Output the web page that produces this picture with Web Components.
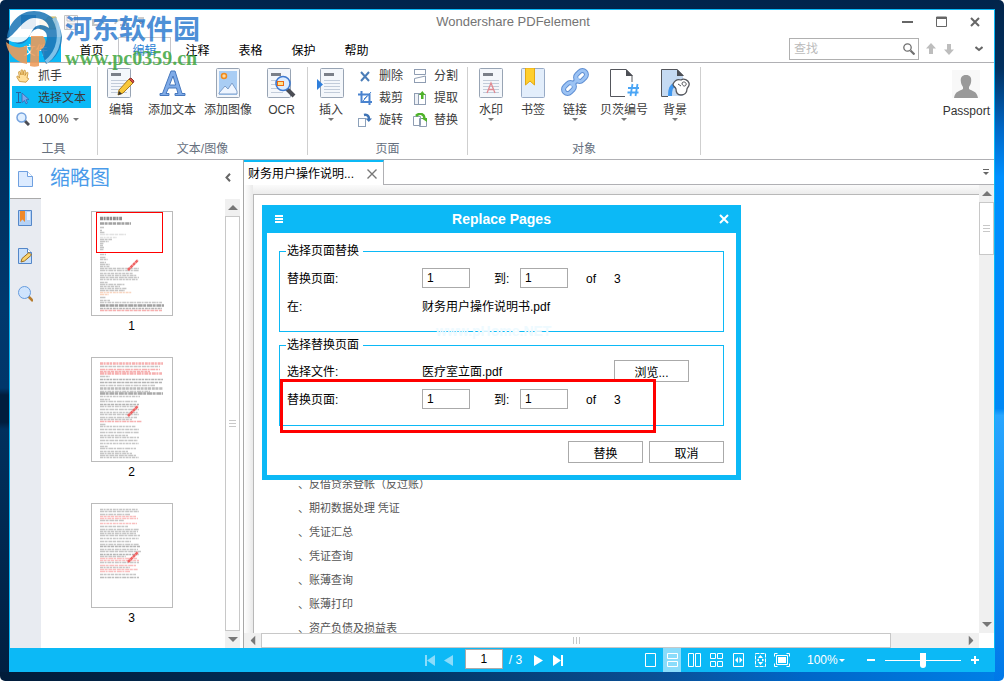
<!DOCTYPE html>
<html lang="zh-CN">
<head>
<meta charset="utf-8">
<title>Wondershare PDFelement</title>
<style>
html,body{margin:0;padding:0;background:#fff}
body{font:12px/16px "Liberation Sans","Noto Sans CJK SC",sans-serif;color:#222;
--blue:#0cb9f6;--line:#b0b0b4;--text:#3b3b3b}
</style>
</head>
<body>
<pdf-window></pdf-window>
<script>
const BASE = `
:host,*{box-sizing:border-box}
button,input,select{font:inherit;color:inherit;margin:0;padding:0;border:0;background:none;border-radius:0;appearance:none;outline:none}
button{cursor:pointer}
a{color:inherit;text-decoration:none}
svg{display:block}
`;
const define = (name, html, setup) => {
  const t = document.createElement('template');
  t.innerHTML = html.replace('<style>', '<style>' + BASE);
  customElements.define(name, class extends HTMLElement {
    constructor() {
      super();
      this.attachShadow({mode: 'open'}).append(t.content.cloneNode(true));
    }
    connectedCallback() { if (setup) setup(this, this.shadowRoot); }
  });
};

/* Icon set: name -> [width, height, markup] */
const sheet = (x = 0) => `<rect x="${x + .5}" y=".5" width="23" height="29" rx="1" fill="#f4f7fb" stroke="#98a4b4"/>`;
const lines = (x = 0, w = 16) => `<path d="M${x + 4} 6.5h10" stroke="#7a7f88" stroke-width="3"/><path d="M${x + 4} 12.5h${w}M${x + 4} 15.5h${w}M${x + 4} 18.5h${w}M${x + 4} 21.5h${w}M${x + 4} 24.5h${w}" stroke="#c2ccda"/>`;
const ICONS = {
  edit: [28, 30, `${sheet()}${lines()}<path d="M11 27l1-5L22 11l4 4-10 10z" fill="#f8c83a" stroke="#a97a1c"/><path d="M22 11l2-1 3 3-1 2z" fill="#d85048" stroke="#94352c"/><path d="M11 27l1-4 3 3z" fill="#333"/>`],
  letter: [28, 30, `<path d="M2 27.500v-2h2.500L13 3h4l7 22.500h3v2H17v-2h3l-1.500-5.500h-8L8 25.500h3v2zM11.500 17h6.200L15 8z" fill="#7fabe8" stroke="#4778bd"/>`],
  image: [24, 30, `${sheet()}<rect x="3" y="3" width="18" height="24" fill="#a9cdf4"/><circle cx="8" cy="8" r="2.500" fill="#ffd9a0" stroke="#ef8a1d" stroke-width="1.500"/><path d="M3 25l6-7 3 3 4-6 5 8v3H3z" fill="#eef5ff" stroke="#7f9fca"/>`],
  ocr: [29, 30, `${sheet()}<path d="M4 6.500h10" stroke="#7a7f88" stroke-width="3"/><path d="M4 12.500h5M4 16.500h5M4 20.500h9M4 24.500h12" stroke="#c2ccda"/><path d="M20 21l7 7" stroke="#4b4d54" stroke-width="4"/><circle cx="16" cy="15.500" r="7" fill="#dcecff" stroke="#3f7ad0" stroke-width="1.600"/><rect x="10.500" y="13.500" width="6" height="4" fill="#ffe08a" stroke="#ee6a12"/>`],
  insert: [28, 30, `${sheet(3)}${lines(3)}<path d="M0 11l6 5.500-6 5.500z" fill="#2f7fdc"/>`],
  watermark: [24, 30, `${sheet()}<path d="M4 6.500h10" stroke="#7a7f88" stroke-width="3"/><path d="M4 12.500h16M4 15.500h16M4 18.500h16M4 21.500h16M4 24.500h16" stroke="#c2ccda"/><path d="M8 25l4-10 4 10M9.500 21.500h5" fill="none" stroke="#e08a92" stroke-width="1.300"/>`],
  bookmark: [24, 30, `<rect x=".5" y=".5" width="23" height="29" rx="1" fill="#e3eefb" stroke="#98abc6"/><path d="M4.500 0h9v17l-4.500-4-4.500 4z" fill="#ffcf2e" stroke="#e2a716"/>`],
  link: [28, 30, `<g fill="none" stroke="#5f8fd3" stroke-width="5"><rect x="-6" y="-4" width="12" height="8" rx="4" transform="translate(20 8) rotate(-45)"/><rect x="-6" y="-4" width="12" height="8" rx="4" transform="translate(8 20) rotate(-45)"/><path d="M11 17l6-6"/></g><g fill="none" stroke="#9cc3f4" stroke-width="3"><rect x="-6" y="-4" width="12" height="8" rx="4" transform="translate(20 8) rotate(-45)"/><rect x="-6" y="-4" width="12" height="8" rx="4" transform="translate(8 20) rotate(-45)"/><path d="M10 18l8-8"/></g>`],
  bates: [30, 30, `<path d="M16 28.500H1.500v-27H17l6 6V14" fill="#fff" stroke="#54565c"/><path d="M17 1v7h7z" fill="#4d4f55"/><path d="M23.500 16l-2 12M28.500 16l-2 12M19 20h11M18.500 24.500h11" stroke="#4aa5f5" stroke-width="1.800"/>`],
  background: [30, 30, `<path d="M1 1h16l6 6v21H1z" fill="#c5daf2"/><path d="M8 28.500H1.500v-27H17l6 6" fill="none" stroke="#54565c"/><path d="M17 1v7h7z" fill="#4d4f55"/><path d="M10 28c0-7 1-10 5-11" fill="none" stroke="#3f97ef" stroke-width="4"/><path d="M13 16c2-4 5-5 8-4 3-2 7 0 8 3 1 4-2 4-2 6 0 4-3 6-6 6-4 0-5-3-5-6-1-3-3-2-3-5z" fill="#fff" stroke="#54565c" stroke-width="1.300"/><path d="M18 16l3 2M22 15c1-2 5-1 4 2-1 2-4 1-4-2z" fill="none" stroke="#54565c"/>`],
  hand: [14, 14, `<path d="M3.500 12.500L1 8.500c-.8-1.500 1-1.800 1.600-.8L3.500 9 2.600 3.500c-.2-1.300 1.300-1.500 1.600-.2L5 6V1.700C5 .4 6.700.4 6.800 1.700L7 6l.8-4c.3-1.200 1.800-1 1.600.3L9 6.500l1.400-2.700c.6-1 1.900-.5 1.500.7L11 9l1 .2c1 .3.8 1-.3 2l-1.700 2z" fill="#ffdf9a" stroke="#c48b2c" stroke-width=".8"/>`],
  seltext: [14, 14, `<path d="M0 1.500h5M0 11.500h5M2.500 1v11" stroke="#27639f"/><path d="M6 2l7 6.500-3 .3 1.500 3.200-1.500.8L8.500 9.500 6 11.500z" fill="#7da6e8" stroke="#2f68b4" stroke-width=".8"/>`],
  lens: [14, 14, `<path d="M8 8l5 5" stroke="#4b4d54" stroke-width="3"/><circle cx="5.500" cy="5.500" r="4.500" fill="#e0efff" stroke="#74a2de" stroke-width="1.500"/>`],
  del: [14, 14, `<path d="M3 3l8 9M11 3l-8 9" stroke="#4b7db8" stroke-width="2"/>`],
  crop: [14, 14, `<path d="M3.500 0v11H14M0 3.500h11.500V14" fill="none" stroke="#4a83cf" stroke-width="2"/><path d="M5 10L13 1M6 8l3-3" stroke="#4a83cf"/>`],
  rotate: [14, 14, `<rect x=".5" y="5.500" width="7" height="8" fill="#fff" stroke="#8da1ba"/><path d="M6 2c4-1 5 2 5 4" fill="none" stroke="#3f73b5" stroke-width="2.500"/><path d="M7.500 5.500H14L10.800 9z" fill="#3f73b5"/>`],
  split: [14, 14, `<path d="M1.500 0v5.500h11V0M1.500 14V9.500L12.500 7v7" fill="#fff" stroke="#8f9db2"/><path d="M1 .5h12M1 13.500h12" stroke="#8f9db2"/>`],
  extract: [14, 14, `<rect x="1.500" y="2.500" width="8" height="11" fill="#eef1f6" stroke="#8f9db2"/><rect x="5.500" y="3.500" width="7" height="10" fill="#fff" stroke="#8f9db2"/><path d="M8 8V4H6l3.300-4L12.500 4h-2v4z" fill="#4fb32a"/>`],
  replace: [14, 14, `<path d="M.5 3.500h7v9h-7zM6.500 5.500h7v8h-7z" fill="#fff" stroke="#8f9db2"/><path d="M3 3c4-4 8-2 8.500 2" fill="none" stroke="#4fb32a" stroke-width="2.500"/><path d="M8 5h6v4z" fill="#4fb32a"/>`],
  page: [15, 16, `<path d="M.5.500h9l5 5v10H.5z" fill="#dcebff" stroke="#6fa0e0"/><path d="M9.500.500v5h5" fill="#fff" stroke="#6fa0e0"/>`],
  marks: [15, 16, `<path d="M.5.500h13v15H.5z" fill="#b5d2f6" stroke="#5487c9"/><path d="M2 1h5v11L4.500 9.500 2 12z" fill="#f08a2a"/><path d="M9 2h3v8H9z" fill="#e9f3ff"/>`],
  notes: [15, 16, `<path d="M.5.500h9l4 4v11H.5z" fill="#c9e0fb" stroke="#5487c9"/><path d="M9.500.500v4h4" fill="#fff" stroke="#5487c9"/><path d="M3 14l1-3.500 7-6 2.500 2.500-7 6z" fill="#f9d36e" stroke="#9a6d23"/>`],
  find: [15, 16, `<path d="M10 10l5 5" stroke="#b67b2c" stroke-width="2.600"/><circle cx="6.500" cy="6.500" r="6" fill="#cfe4fd" stroke="#659bdd"/>`],
  search: [12, 12, `<path d="M7.500 7.500l4 4" stroke="#707070" stroke-width="2.200"/><circle cx="4.500" cy="4.500" r="3.700" fill="none" stroke="#707070" stroke-width="1.300"/>`],
  up: [10, 12, `<path d="M5 0l5 5.500H7V11H3V5.500H0z" fill="#bdbdbd"/>`],
  down: [10, 12, `<path d="M5 12L0 6.500h3V1h4v5.500h3z" fill="#bdbdbd"/>`],
  chevdown: [8, 6, `<path d="M.5 1L4 4l3.500-3" fill="none" stroke="#666" stroke-width="2"/>`],
  chevleft: [6, 9, `<path d="M5 .8L1.500 4.500 5 8.200" fill="none" stroke="#666" stroke-width="2"/>`],
  caret: [6, 3, `<path d="M0 0h6L3 3z" fill="currentColor"/>`],
  min: [12, 12, `<path d="M0 6h11" stroke="#666" stroke-width="2"/>`],
  max: [12, 12, `<path d="M.5 1h10v9.500H.5z" fill="none" stroke="#666"/><path d="M0 2h11" stroke="#666" stroke-width="2"/>`],
  close: [10, 10, `<path d="M1 1l8 8M9 1L1 9" stroke="currentColor" stroke-width="2"/>`],
  thin: [10, 10, `<path d="M.5.500l9 9M9.500.500l-9 9" stroke="#777" stroke-width="1.400"/>`],
  menu: [8, 8, `<path d="M0 1h8M0 4h8M0 7h8" stroke="#fff" stroke-width="2"/>`],
  user: [28, 28, `<path d="M0 0h28v28H0z" fill="#f8f8f8"/><path d="M14 5c4 0 5.500 2.500 5.200 6-.2 3-1.200 4.500-2.200 6v2c3 2 8 2 9 9H2c1-7 6-7 9-9v-2c-1-1.500-2-3-2.200-6C8.500 7.500 10 5 14 5z" fill="#999"/>`],
  first: [10, 11, `<path d="M1 0v11" stroke="currentColor" stroke-width="2"/><path d="M10 0v11L2 5.500z" fill="currentColor"/>`],
  prev: [9, 11, `<path d="M9 0v11L0 5.500z" fill="currentColor"/>`],
  next: [9, 11, `<path d="M0 0v11l9-5.500z" fill="currentColor"/>`],
  last: [10, 11, `<path d="M9 0v11" stroke="currentColor" stroke-width="2"/><path d="M0 0v11l8-5.500z" fill="currentColor"/>`],
  v1: [11, 14, `<path d="M.5.500h10v13H.5z" fill="none" stroke="#fff"/>`],
  v2: [11, 14, `<path d="M.5.500h10v5H.5zM.5 8.500h10v5H.5z" fill="none" stroke="#fff"/>`],
  v3: [13, 14, `<path d="M.5.500h5v13h-5zM7.500.500h5v13h-5z" fill="none" stroke="#fff"/>`],
  v4: [13, 14, `<path d="M.5.500h5v5h-5zM7.500.500h5v5h-5zM.5 8.500h5v5h-5zM7.500 8.500h5v5h-5z" fill="none" stroke="#fff"/>`],
  v5: [11, 14, `<path d="M.5.500h10v13H.5z" fill="none" stroke="#fff"/><path d="M5 4v6L2 7zM6.500 4v6l3-3z" fill="#fff"/>`],
  v6: [11, 14, `<path d="M.5.500h10v13H.5z" fill="none" stroke="#fff" stroke-dasharray="4 1"/><path d="M5.500 2L8 5H3zM5.500 12L3 9h5zM1.500 7L4 5.500v3zM9.500 7L7 5.500v3z" fill="#fff"/>`],
  v7: [16, 14, `<path d="M3.500.500H.5v3M12.500.500h3v3M.5 10.500v3h3M15.500 10.500v3h-3M2.500 2.500h11v9h-11z" fill="none" stroke="#fff"/><path d="M4 4h8v6H4z" fill="#fff"/>`],
  minus: [8, 8, `<path d="M0 4h8" stroke="#fff" stroke-width="2"/>`],
  plus: [8, 8, `<path d="M0 4h8M4 0v8" stroke="#fff" stroke-width="2"/>`],
  quick: [130, 18, `<path d="M1 2h15v14H1z" fill="#2a6fb0"/><path d="M20 7h6l2-3h8v12H20z" fill="#e9d27a" stroke="#c9b060"/><path d="M44.500 2.500h13v14h-13zM47 3v5h8V3M47 16v-5h8v5" fill="#f6f6f6" stroke="#c4c4c4"/><path d="M73 12c0-6 9-7 11-1M73 6v6h6M106 12c0-6-9-7-11-1M106 6v6h-6" fill="none" stroke="#c4c4c4" stroke-width="2"/><path d="M118 5h6M118 8h6l-3 3z" fill="#999" stroke="#999"/>`]
};
const glyph = name => {
  const [w, h, m] = ICONS[name];
  return `<svg width="${w}" height="${h}" viewBox="0 0 ${w} ${h}" aria-hidden="true">${m}</svg>`;
};
define('ui-icon', `<style>:host{display:block;flex:none}span{display:block}</style><span></span>`, (el, r) => {
  r.querySelector('span').innerHTML = glyph(el.getAttribute('name'));
});

define('title-bar', `<style>
:host{display:flex;align-items:center;height:27px;padding:0 12px 3px 10px;color:#747474}
h1{flex:1;margin:0;padding-right:26px;font:13px/16px "Liberation Sans",sans-serif;text-align:center}
.win{display:flex;gap:22px;color:#666}
.win button{width:12px;height:12px}
</style>
<ui-icon name="quick"></ui-icon>
<h1>Wondershare PDFelement</h1>
<div class="win"><button aria-label="最小化"><ui-icon name="min"></ui-icon></button><button aria-label="最大化"><ui-icon name="max"></ui-icon></button><button aria-label="关闭"><ui-icon name="close"></ui-icon></button></div>`);

define('menu-tabs', `<style>
:host{display:flex;align-items:flex-end;height:26px;border-bottom:1px solid var(--line);color:#000}
nav{display:flex;flex:1;height:25px}
a{display:block;width:53px;text-align:center;line-height:28px;height:25px}
a.file{width:51px;background:var(--blue);color:#fff;margin-right:4px}
a.on{color:#2a7fd4;border:1px solid #c6c6ca;border-bottom:0;line-height:26px}
.search{display:flex;align-items:center;width:130px;height:22px;margin:0 3px 2px 0;padding:0 3px 0 4px;border:1px solid #b0b0b0}
.search input{flex:1;min-width:0;height:18px}
.search input::placeholder{color:#bbb;opacity:1}
.tools{display:flex;align-items:center;height:20px;margin-bottom:3px;padding-right:6px}
.tools button{width:18px;display:flex;justify-content:center}
.tools button:last-child{margin-left:12px}
</style>
<nav><a class="file" href="#f">文件</a><a href="#h">首页</a><a class="on" href="#e">编辑</a><a href="#a">注释</a><a href="#t">表格</a><a href="#p">保护</a><a href="#b">帮助</a></nav>
<label class="search"><input placeholder="查找" aria-label="查找"><ui-icon name="search"></ui-icon></label>
<div class="tools"><button aria-label="上一个"><ui-icon name="up"></ui-icon></button><button aria-label="下一个"><ui-icon name="down"></ui-icon></button><button aria-label="折叠"><ui-icon name="chevdown"></ui-icon></button></div>`);

define('ribbon-group', `<style>
:host{display:flex;flex-direction:column;border-right:1px solid #cfcfcf;margin:4px 0}
.items{display:flex;flex:1;min-height:0}
h2{margin:0 0 -2px;font-size:12px;font-weight:400;line-height:16px;text-align:center;color:#66707e}
</style><div class="items"><slot></slot></div><h2></h2>`, (el, r) => { r.querySelector('h2').textContent = el.getAttribute('label'); });

define('ribbon-button', `<style>
:host{display:block;width:var(--w,46px);color:var(--text)}
:host([wide]){width:56px}
button{display:flex;flex-direction:column;align-items:center;width:100%;padding-top:1px;white-space:nowrap}
.holder{height:30px}
span{margin-top:4px;line-height:16px}
.caret{color:#777}
:host(:not([menu])) .caret{display:none}
</style><button><div class="holder"></div><span><slot></slot></span><ui-icon class="caret" name="caret"></ui-icon></button>`, (el, r) => {
  r.querySelector('.holder').innerHTML = glyph(el.getAttribute('icon'));
});

define('tool-button', `<style>
:host{display:block;color:var(--text)}
button{display:flex;align-items:center;gap:var(--g,7px);height:22px;width:100%;padding:1px 4px 0;white-space:nowrap}
:host([on]) button{background:var(--blue)}
.holder{width:14px;height:14px}
</style><button><div class="holder"></div><slot></slot></button>`, (el, r) => {
  r.querySelector('.holder').innerHTML = glyph(el.getAttribute('icon'));
});

define('ribbon-bar', `<style>
:host{display:flex;height:97px;border-bottom:1px solid var(--line)}
.hand{width:87px;padding:0 6px 0 2px;margin-top:-3px}
.zoom{display:flex;align-items:center;height:22px;padding-left:4px;gap:8px;color:var(--text)}
.zoom select{width:32px;margin-right:-5px}
.zoom .c{color:#777}
.cols{display:grid;grid-template-columns:55px 58px;grid-auto-rows:22px;align-content:start;margin-top:-3px}
.user{margin-left:auto;display:flex;flex-direction:column;align-items:center;padding:7px 4px 0 0;color:#333;height:60px}
.user span{margin-top:5px}
.obj{--w:42px;padding:0 2px}
</style>
<ribbon-group label="工具"><div class="hand"><tool-button icon="hand" style="--g:8px">抓手</tool-button><tool-button icon="seltext" on style="--g:8px">选择文本</tool-button><div class="zoom"><ui-icon name="lens"></ui-icon><select aria-label="缩放"><option>100%</option></select><ui-icon class="c" name="caret"></ui-icon></div></div></ribbon-group>
<ribbon-group label="文本/图像"><ribbon-button icon="edit">编辑</ribbon-button><ribbon-button wide icon="letter">添加文本</ribbon-button><ribbon-button wide icon="image">添加图像</ribbon-button><ribbon-button style="--w:51px" icon="ocr">OCR</ribbon-button></ribbon-group>
<ribbon-group label="页面"><ribbon-button icon="insert" menu>插入</ribbon-button><div class="cols"><tool-button icon="del">删除</tool-button><tool-button icon="split">分割</tool-button><tool-button icon="crop">裁剪</tool-button><tool-button icon="extract">提取</tool-button><tool-button icon="rotate">旋转</tool-button><tool-button icon="replace">替换</tool-button></div></ribbon-group>
<ribbon-group class="obj" label="对象"><ribbon-button icon="watermark" menu>水印</ribbon-button><ribbon-button icon="bookmark">书签</ribbon-button><ribbon-button icon="link" menu>链接</ribbon-button><ribbon-button wide icon="bates" menu>贝茨编号</ribbon-button><ribbon-button style="--w:46px" icon="background" menu>背景</ribbon-button></ribbon-group>
<button class="user"><ui-icon name="user"></ui-icon><span>Passport</span></button>`);

define('side-rail', `<style>
:host{display:flex;flex-direction:column;width:31px;background:#e8ebf1}
button{display:flex;align-items:center;justify-content:center;height:38px;width:31px}
button.on{height:39px;background:#fff;border-bottom:1px solid #aaa}
</style><button class="on" aria-label="缩略图"><ui-icon name="page"></ui-icon></button><button aria-label="书签"><ui-icon name="marks"></ui-icon></button><button aria-label="注释"><ui-icon name="notes"></ui-icon></button><button aria-label="搜索"><ui-icon name="find"></ui-icon></button>`);

define('scroll-bar', `<style>
:host{display:flex;flex-direction:column;width:15px;background:#f0f0f0}
:host([dir=h]){flex-direction:row;width:auto;height:15px}
button{display:flex;align-items:center;justify-content:center;flex:none;width:15px;height:17px}
:host([dir=h]) button{width:17px;height:15px}
.thumb{display:flex;align-items:center;justify-content:center;flex:var(--size,1) 1 0;background:#fff;border:1px solid #c8c8c8}
.rest{flex:var(--rest,0) 1 0}
.g{width:7px;height:7px;background:repeating-linear-gradient(#c8c8c8 0 1px,transparent 1px 3px)}
:host([dir=h]) .g{background:repeating-linear-gradient(90deg,#c8c8c8 0 1px,transparent 1px 3px)}
:host([dir=h]) svg{transform:rotate(-90deg)}
</style>
<button aria-label="向前"><svg width="10" height="5"><path d="M5 0l5 5H0z" fill="#777"/></svg></button><div class="thumb"><div class="g"></div></div><div class="rest"></div><button aria-label="向后"><svg width="10" height="5"><path d="M5 5L0 0h10z" fill="#777"/></svg></button>`);

/* Page miniature: rows are [y, width, colour], drawn as dashed strokes */
const MINI = {
  1: [[6,22,'#333',3],[11,31,'#555',2],[15,4],[18,2],[20,5],[22,26,'#ccc'],[25,17,'#ccc'],[27,12],[29,9],[31,4],[33,3],[35,4],[37,4],[42,6],[45,6],[47,8],[50,6],[52,10],[54,10],[56,39],[58,39],[61,33],[63,37],[65,39],[67,38],[70,8],[72,25],[74,20],[76,27],[78,25],[80,32,'#f3b48e'],[82,9,'#f3b48e'],[85,6],[88,10],[90,62],[93,64,'#555',2],[96,62,'#777'],[98,62,'#f07070']],
  2: [[5,63,'#f07070',2],[8,60],[11,60,'#f07070'],[13,50,'#f07070'],[15,62,'#f07070',2],[18,10],[21,63,'#777'],[24,62,'#777'],[27,55],[30,63,'#888',2],[33,50],[35,63,'#666',2],[38,40],[41,10],[43,37],[46,39,'#777'],[48,36],[51,39],[54,38],[56,39],[59,37],[61,32],[63,42,'#f07070'],[66,6],[68,36],[71,39],[74,39],[77,28],[79,39],[82,38],[85,39],[88,8],[90,36],[93,28],[95,32],[97,36],[99,39]],
  3: [[5,38],[7,39],[10,30],[12,36,'#f58a8a'],[14,38,'#f58a8a'],[16,24],[19,37,'#f58a8a'],[22,28],[25,39],[27,38],[29,36],[31,40],[34,39],[37,31],[40,39],[42,40,'#777'],[45,38],[47,41],[50,39,'#777'],[52,26],[54,37,'#f58a8a'],[56,39,'#f58a8a'],[58,39],[61,36,'#f58a8a'],[63,30],[65,38,'#f58a8a'],[67,30,'#f58a8a'],[70,36],[73,39,'#888']]
};
define('page-thumb', `<style>
:host{display:block;height:146px;text-align:center;color:#000}
a{display:block}
.p{display:block;width:82px;height:105px;margin:0 auto 2px;border:1px solid #bbb;background:#fff}
.n{display:block}
</style><a href="#page"><span class="p"></span><span class="n"></span></a>`, (el, r) => {
  const n = el.getAttribute('n');
  const rows = MINI[n].map(([y, w, c = '#999', h = 1], i) => `<path d="M8 ${y + .5}h${w}" stroke="${c}" stroke-width="${h + .6}" stroke-dasharray="${3 + i % 3} .6 ${2 + i % 2} .8" opacity=".55"/>`).join('');
  r.querySelector('.p').innerHTML = `<svg width="80" height="103">${rows}<path d="M36 58l10-10" stroke="#ef6464" stroke-width="2.500" stroke-dasharray="3 .5"/>${n == 1 ? '<rect x="4.500" y=".5" width="66" height="40" fill="none" stroke="#ff0000"/>' : ''}</svg>`;
  r.querySelector('.n').textContent = n;
});

define('thumb-panel', `<style>
:host{display:flex;flex-direction:column;width:203px;border-right:1px solid #a8a8a8;background:#fff}
header{display:flex;align-items:center;justify-content:space-between;height:39px;padding:0 12px 4px 9px}
h2{margin:0;font-size:20px;line-height:28px;font-weight:400;color:#4a9bea}
.body{display:flex;flex:1}
.list{flex:1;contain:size;overflow:hidden;padding:12px 3px 0 0}
scroll-bar{margin-right:3px}
</style><header><h2>缩略图</h2><button aria-label="收起"><ui-icon name="chevleft"></ui-icon></button></header>
<div class="body"><div class="list"><page-thumb n="1"></page-thumb><page-thumb n="2"></page-thumb><page-thumb n="3"></page-thumb></div><scroll-bar></scroll-bar></div>`);

define('doc-view', `<style>
:host{display:flex;flex:1;flex-direction:column;min-width:0;background:#fff}
.tabs{display:flex;height:25px}
.tab{display:flex;align-items:center;justify-content:space-between;width:140px;padding:1px 6px 0 4px;border-top:2px solid var(--blue);border-right:1px solid var(--line);color:#000}
.fill{flex:1;display:flex;justify-content:flex-end;align-items:center;padding-right:5px;border-bottom:1px solid var(--line);color:#666}
.over{border-top:1px solid #666;padding-top:2px}
.mid{display:flex;flex:1;min-height:0}
.canvas{flex:1;contain:size;overflow:hidden;padding:9px 0 0 9px;background:linear-gradient(90deg,#fff,#eaeaea 9px,#eee) no-repeat 0 0/9px 100%,linear-gradient(#fbfbfb,#ececec) no-repeat 0 0/100% 9px}
.sheet{min-height:100%;border:1px solid #b8b8b8;border-width:1px 0 0 1px;padding:277px 0 0 44px;background:#fff}
p{margin:0;height:24px;font:11px/24px "Liberation Serif","Noto Sans CJK SC",serif;color:#555}
.end{display:flex}
.end scroll-bar{flex:1}
.corner{width:15px;background:#fff}
</style>
<div class="tabs"><div class="tab"><span>财务用户操作说明...</span><button aria-label="关闭标签"><ui-icon name="thin"></ui-icon></button></div><div class="fill"><button class="over" aria-label="标签列表"><ui-icon name="caret"></ui-icon></button></div></div>
<div class="mid"><div class="canvas"><div class="sheet"><p>、反借贷余登帐（反过账）</p><p>、期初数据处理 凭证</p><p>、凭证汇总</p><p>、凭证查询</p><p>、账薄查询</p><p>、账薄打印</p><p>、资产负债及损益表</p></div></div><scroll-bar style="--size:51;--rest:363"></scroll-bar></div>
<div class="end"><scroll-bar dir="h" style="--size:631;--rest:71"></scroll-bar><div class="corner"></div></div>`);

define('field-group', `<style>
:host{display:block}
fieldset{margin:0;padding:var(--top,5px) 7px var(--bottom,11px);border:1px solid var(--blue);min-width:0}
legend{padding:0 4px 0 1px;margin-left:-1px;line-height:16px}
</style><fieldset><legend><slot name="legend"></slot></legend><slot></slot></fieldset>`);

define('replace-dialog', `<style>
:host{display:block;width:479px;border:5px solid var(--blue);border-top:0;background:#fff;color:#000}
header{display:flex;align-items:center;height:28px;padding:0 7px;background:var(--blue);color:#fff}
h2{flex:1;margin:0;text-align:center;font:bold 14px/16px "Liberation Sans",sans-serif}
header button{display:flex;justify-content:center;width:10px}
.body{padding:10px 12px 12px}
field-group{margin-bottom:5px}
.pick{--top:4px;--bottom:12px}
.row{display:grid;grid-template-columns:135px 72px 26px 66px 28px 1fr;align-items:center;height:28px}
.row .wide{grid-column:span 4}
.row>:not(.box,.btn){padding-top:2px}
.row input{display:block;width:48px;height:20px;border:1px solid #aaa;padding:0 4px;line-height:18px}
.btn{width:75px;height:22px;border:1px solid #aaa;background:#fff;line-height:20px;padding-top:2px}
footer{display:flex;justify-content:flex-end;gap:6px;padding-top:10px}
.mark{position:absolute;left:169px;top:118px;font:bold 14px/16px "Liberation Sans",sans-serif;color:#eefaff;white-space:nowrap}
.callout{position:absolute;left:13px;top:174px;width:376px;height:54px;border:3px solid #f00;pointer-events:none}
</style>
<header><button aria-label="菜单"><ui-icon name="menu"></ui-icon></button><h2>Replace Pages</h2><button aria-label="关闭"><ui-icon name="close"></ui-icon></button></header>
<div class="body">
<field-group><span slot="legend">选择页面替换</span>
<div class="row"><label for="a">替换页面:</label><span class="box"><input id="a" value="1"></span><label for="b">到:</label><span class="box"><input id="b" value="1"></span><span>of</span><span>3</span></div>
<div class="row"><span>在:</span><span class="wide">财务用户操作说明书.pdf</span></div></field-group>
<field-group class="pick"><span slot="legend">选择替换页面</span>
<div class="row"><span>选择文件:</span><span class="wide">医疗室立面.pdf</span><button class="btn">浏览...</button></div>
<div class="row"><label for="c">替换页面:</label><span class="box"><input id="c" value="1"></span><label for="d">到:</label><span class="box"><input id="d" value="1"></span><span>of</span><span>3</span></div></field-group>
<footer><button class="btn">替换</button><button class="btn">取消</button></footer>
</div>
<div class="mark">www.pHome.NET</div><div class="callout"></div>`);

define('status-bar', `<style>
:host{display:grid;grid-template-columns:1fr auto 1fr;height:24px;background:var(--blue);color:#fff}
.pager{grid-column:2;display:flex;align-items:center;padding-right:16px}
.pager button{display:flex}
.dim{color:#8adcfb}
.pager input{width:38px;height:20px;margin:0 6px 2px 12px;border:1px solid #aaa;background:#fff;color:#000;text-align:center}
.right{display:flex;align-items:center;justify-content:flex-end;padding-right:15px}
.right button{display:flex;align-items:center;justify-content:center}
.v{width:22px;height:24px}
.v.on{width:18px;margin:0 2px;background:#8adcfb}
.right select{width:32px;margin-left:14px}
.m{margin:0 10px 0 22px}
input[type=range]{width:76px;height:16px;margin-right:10px;background:linear-gradient(#fff,#fff) center/100% 1px no-repeat}
input[type=range]::-webkit-slider-thumb{appearance:none;width:6px;height:15px;background:#fff;border-radius:0 0 3px 3px}
</style>
<div class="pager"><button class="dim" aria-label="首页"><ui-icon name="first"></ui-icon></button><button class="dim" style="margin-left:9px" aria-label="上一页"><ui-icon name="prev"></ui-icon></button><input value="1" aria-label="页码"><span>/ 3</span><button style="margin-left:12px" aria-label="下一页"><ui-icon name="next"></ui-icon></button><button style="margin-left:10px" aria-label="末页"><ui-icon name="last"></ui-icon></button></div>
<div class="right"><button class="v" aria-label="单页"><ui-icon name="v1"></ui-icon></button><button class="v on" aria-label="连续"><ui-icon name="v2"></ui-icon></button><button class="v" aria-label="双页"><ui-icon name="v3"></ui-icon></button><button class="v" aria-label="双页连续"><ui-icon name="v4"></ui-icon></button><button class="v" aria-label="适合宽度"><ui-icon name="v5"></ui-icon></button><button class="v" aria-label="适合页面"><ui-icon name="v6"></ui-icon></button><button class="v" aria-label="全屏"><ui-icon name="v7"></ui-icon></button>
<select aria-label="缩放比例"><option>100%</option></select><ui-icon name="caret"></ui-icon><button class="m" aria-label="缩小"><ui-icon name="minus"></ui-icon></button><input type="range" aria-label="缩放滑块" value="50"><button aria-label="放大"><ui-icon name="plus"></ui-icon></button></div>`);

define('site-mark', `<style>
:host{display:flex;gap:2px;pointer-events:none}
svg{opacity:.88}
.t{display:flex;flex-direction:column;padding-top:3px;white-space:nowrap}
b{font:bold 27px/35px "Liberation Sans","Noto Sans CJK SC",sans-serif;color:rgba(46,124,208,.85)}
i{font:bold 20px/20px "Liberation Serif",serif;color:rgba(62,166,62,.85)}
</style>
<svg width="58" height="58" viewBox="0 0 58 58"><path d="M2 27C4 12 15 1 29 1c15 0 27 12 28 26 0 11-6 22-16 27l-5-14c7-8 8-17 2-20-5-3-11 0-13 5-4 10-12 13-23 2z" fill="#1f78b8"/><path d="M1 32c7 6 15 7 21 3v19C10 52 2 43 1 32z" fill="#ef9b58"/><path d="M26 26h12c5 6 2 12-4 15v15c-3 1-6 1-9 0z" fill="#ef9b58"/><path d="M1 29C9 27 18 8 29 8c9 0 14 4 15 10-7-5-14-4-17 3-4 11-14 15-26 8z" fill="#fff"/><path d="M49 8c9 15 5 34-8 44" fill="none" stroke="#8fc4e8" stroke-width="4"/></svg>
<div class="t"><b>河东软件园</b><i>www.pc0359.cn</i></div>`);

define('pdf-window', `<style>
:host{display:flex;min-height:100vh;padding:9px;position:relative;border-radius:5px;
background:linear-gradient(#02244a 0,#02305f 10%,#0068c8 19%,#0090ff 26%,#0088f5 60%,#29a6ff 61%,#0078e8 100%) right/10px 100% no-repeat,
linear-gradient(90deg,#011c3a 0,#013563 40%,#0a4f95 65%,#0066c8 80%,#0080e8) bottom/100% 9px no-repeat,
linear-gradient(#01244b 0,#01386d 45%,#01366a 57%,#011d3d 58%,#011d3d 62%,#012f5d 63%,#011f40 100%)}
.win{display:flex;flex-direction:column;flex:1;min-width:0;border:1px solid var(--blue);border-bottom:0;background:#fff}
.main{display:flex;flex:1;min-height:0}
replace-dialog{position:absolute;left:262px;top:205px}
site-mark{position:absolute;left:5px;top:10px}
</style>
<div class="win"><title-bar></title-bar><menu-tabs></menu-tabs><ribbon-bar></ribbon-bar><div class="main"><side-rail></side-rail><thumb-panel></thumb-panel><doc-view></doc-view></div><status-bar></status-bar></div>
<replace-dialog></replace-dialog><site-mark></site-mark>`);
</script>
</body>
</html>
